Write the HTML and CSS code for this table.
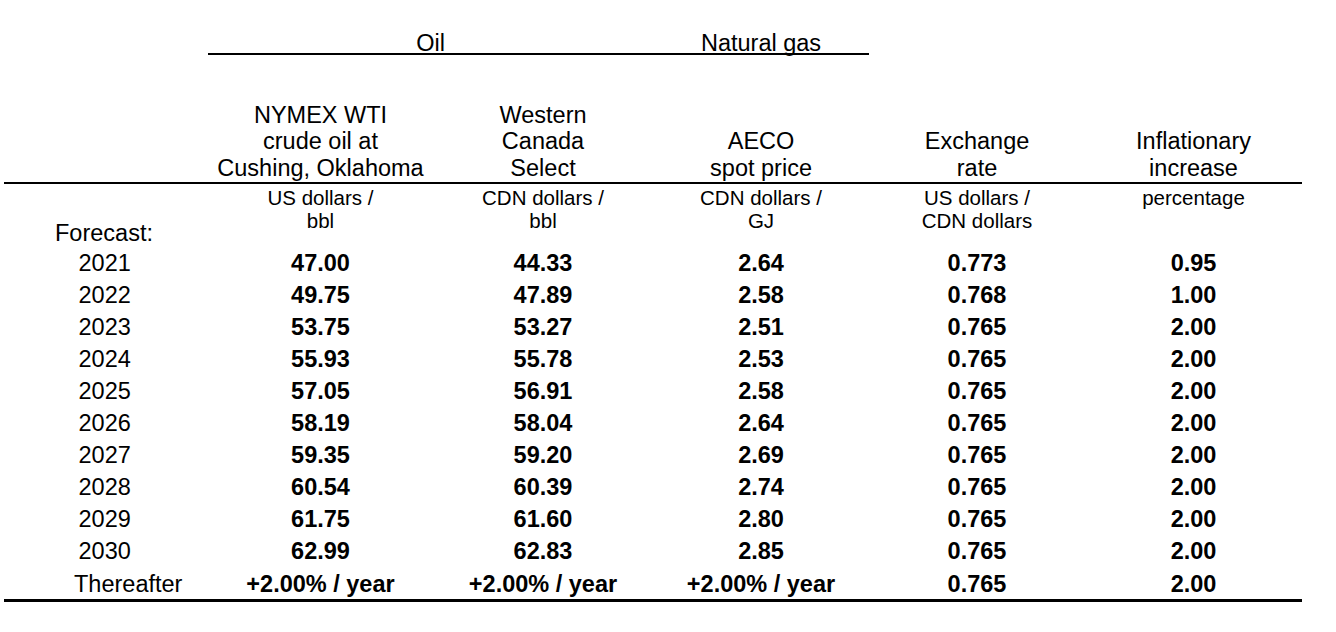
FILE: index.html
```html
<!DOCTYPE html>
<html lang="en">
<head>
<meta charset="utf-8">
<title>Price forecast</title>
<link rel="stylesheet" href="styles.css">
</head>
<body>
<table class="prices">
  <colgroup>
    <col class="c-label">
    <col class="c-wti">
    <col class="c-wcs">
    <col class="c-aeco">
    <col class="c-fx">
    <col class="c-infl">
  </colgroup>
  <thead>
    <tr class="group">
      <th></th>
      <th colspan="2" class="grp">Oil</th>
      <th class="grp">Natural gas</th>
      <th></th>
      <th></th>
    </tr>
    <tr class="heads">
      <th></th>
      <th>NYMEX WTI<br>crude oil at<br>Cushing, Oklahoma</th>
      <th>Western<br>Canada<br>Select</th>
      <th>AECO<br>spot price</th>
      <th>Exchange<br>rate</th>
      <th>Inflationary<br>increase</th>
    </tr>
    <tr class="units">
      <th class="forecast">Forecast:</th>
      <td>US dollars /<br>bbl</td>
      <td>CDN dollars /<br>bbl</td>
      <td>CDN dollars /<br>GJ</td>
      <td>US dollars /<br>CDN dollars</td>
      <td>percentage</td>
    </tr>
  </thead>
  <tbody>
    <tr><th class="year">2021</th><td>47.00</td><td>44.33</td><td>2.64</td><td>0.773</td><td>0.95</td></tr>
    <tr><th class="year">2022</th><td>49.75</td><td>47.89</td><td>2.58</td><td>0.768</td><td>1.00</td></tr>
    <tr><th class="year">2023</th><td>53.75</td><td>53.27</td><td>2.51</td><td>0.765</td><td>2.00</td></tr>
    <tr><th class="year">2024</th><td>55.93</td><td>55.78</td><td>2.53</td><td>0.765</td><td>2.00</td></tr>
    <tr><th class="year">2025</th><td>57.05</td><td>56.91</td><td>2.58</td><td>0.765</td><td>2.00</td></tr>
    <tr><th class="year">2026</th><td>58.19</td><td>58.04</td><td>2.64</td><td>0.765</td><td>2.00</td></tr>
    <tr><th class="year">2027</th><td>59.35</td><td>59.20</td><td>2.69</td><td>0.765</td><td>2.00</td></tr>
    <tr><th class="year">2028</th><td>60.54</td><td>60.39</td><td>2.74</td><td>0.765</td><td>2.00</td></tr>
    <tr><th class="year">2029</th><td>61.75</td><td>61.60</td><td>2.80</td><td>0.765</td><td>2.00</td></tr>
    <tr><th class="year">2030</th><td>62.99</td><td>62.83</td><td>2.85</td><td>0.765</td><td>2.00</td></tr>
    <tr class="last"><th class="after">Thereafter</th><td>+2.00% / year</td><td>+2.00% / year</td><td>+2.00% / year</td><td>0.765</td><td>2.00</td></tr>
  </tbody>
</table>
</body>
</html>
```
FILE: styles.css
```css
html, body {
  margin: 0;
  padding: 0;
  background: #ffffff;
}

body {
  font-family: "Liberation Sans", Arial, Helvetica, sans-serif;
  color: #000000;
}

.prices {
  margin-left: 4px;
  width: 1298px;
  table-layout: fixed;
  border-collapse: separate;
  border-spacing: 0;
  font-size: 23.5px;
}

.c-label { width: 204px; }
.c-wti { width: 225px; }
.c-wcs { width: 220px; }
.c-aeco { width: 216px; }
.c-fx { width: 216px; }
.c-infl { width: 217px; }

.prices th,
.prices td {
  padding: 0;
  font-weight: normal;
  text-align: center;
}

/* group row: Oil / Natural gas */
.group th {
  padding-top: 34px;
  line-height: 19px;
  vertical-align: bottom;
}

.group .grp {
  border-bottom: 2px solid #000;
}

/* column headings */
.heads th {
  padding-top: 46.5px;
  padding-bottom: 1px;
  line-height: 26.5px;
  vertical-align: bottom;
  border-bottom: 2px solid #000;
}

/* units row */
.units td {
  vertical-align: top;
  padding-top: 1.5px;
  font-size: 20.5px;
  line-height: 23px;
}

.units .forecast {
  text-align: left;
  vertical-align: bottom;
  padding-top: 36px;
  padding-bottom: 1px;
  padding-left: 51px;
  line-height: 26px;
}

/* data rows */
.prices tbody td,
.prices tbody th {
  line-height: 32px;
  vertical-align: top;
}

.prices tbody td {
  font-weight: bold;
}

.prices .year {
  text-align: left;
  padding-left: 74.5px;
}

.prices .after {
  text-align: left;
  padding-left: 70px;
}

.prices .last th,
.prices .last td {
  line-height: 30px;
  padding-top: 1.5px;
  border-bottom: 3px solid #000;
}
```
